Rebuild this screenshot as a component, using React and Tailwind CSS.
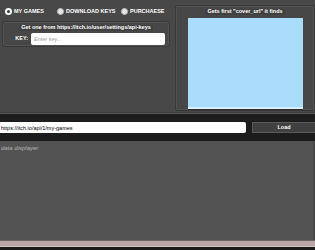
import React, { useState } from 'react';

function Radio({ checked, label, onClick, className }) {
  return (
    <button type="button" onClick={onClick} className={`flex items-center gap-[2px] whitespace-nowrap shrink-0 ${className}`}>
      {checked ? (
        <span className="shrink-0 w-[7px] h-[7px] rounded-full border-[2px] border-white bg-[#3a3a3a]" />
      ) : (
        <span className="shrink-0 w-[7px] h-[7px] rounded-full bg-[#e6e6e6] border border-[#bdbdbd]" />
      )}
      <span className="text-[5.5px] leading-none font-bold text-white">{label}</span>
    </button>
  );
}

export default function App() {
  const [mode, setMode] = useState('games');
  const [key, setKey] = useState('');
  const [url, setUrl] = useState('https://itch.io/api/1/my-games');

  return (
    <div className="w-[315px] h-[250px] bg-[#484848] flex flex-col overflow-hidden font-['Liberation_Sans',Arial,sans-serif]">
      {/* top section */}
      <div className="h-[113px] flex border-b border-[#3c3c3c]">
        <div className="w-[175px] shrink-0 flex flex-col">
          <div className="h-[21px] flex items-center pl-[5px] pt-[2px]">
            <Radio className="w-[52px]" checked={mode === 'games'} label="MY GAMES" onClick={() => setMode('games')} />
            <Radio className="w-[64px]" checked={mode === 'keys'} label="DOWNLOAD KEYS" onClick={() => setMode('keys')} />
            <Radio checked={mode === 'purchase'} label="PURCHAESE" onClick={() => setMode('purchase')} />
          </div>
          <div className="ml-[2px] mr-[5px] h-[26px] rounded-[3px] border border-[#3a3a3a] bg-[#474747] shadow-[inset_0_0_0_1px_#525252] flex flex-col items-center">
            <div className="text-[5.5px] font-bold text-white leading-none mt-[3px] px-[2px] bg-[#404040]">
              Get one from https://itch.io/user/settings/api-keys
            </div>
            <div className="flex items-center w-full mt-[2px]">
              <span className="text-[5.5px] font-bold text-white w-[28px] text-right pr-[3px]">KEY:</span>
              <input
                value={key}
                onChange={(e) => setKey(e.target.value)}
                placeholder="Enter key..."
                className="w-[134px] h-[12px] bg-white rounded-[2px] px-[3px] text-[5.5px] italic text-black placeholder:text-[#a0a0a0] outline-none"
              />
            </div>
          </div>
        </div>
        <div className="flex-1 mt-[5px] mb-[1px] border border-[#383838] rounded-[2px] bg-[#474747] shadow-[inset_0_0_0_1px_#525252] flex flex-col items-center">
          <div className="text-[5.5px] font-bold text-white leading-none mt-[3px] px-[2px] bg-[#404040]">Gets first "cover_url" it finds</div>
          <div className="mt-[3px] w-[115px] h-[91px] bg-[#aadcfc] border-b-[2px] border-[#d8efff] shadow-[0_1px_0_#2e2e2e]" />
        </div>
      </div>

      {/* url bar */}
      <div className="h-[28px] bg-[#1c1c1c] border-t border-[#5a5a5a] flex items-start pt-[8px] gap-[6px]">
        <input
          value={url}
          onChange={(e) => setUrl(e.target.value)}
          className="w-[246px] h-[11px] bg-white rounded-r-[2px] px-[1px] text-[5.5px] text-black outline-none"
        />
        <button type="button" className="flex-1 h-[11px] bg-[#404040] border border-[#5a5a5a] border-r-0 text-[5.5px] font-bold text-white leading-none">
          Load
        </button>
      </div>

      {/* data display */}
      <div className="flex-1 bg-[#535353] border-r-[2px] border-[#474747] pt-[3px] pl-[1px]">
        <div className="text-[6px] italic text-[#b4b4b4]">data displayer</div>
      </div>
      <div className="h-[7px] bg-[#b8a6a8] border-t border-[#6f6565] border-b border-b-[#d0c0c2]" />
      <div className="h-[3px] bg-[#1a1a1a]" />
    </div>
  );
}
